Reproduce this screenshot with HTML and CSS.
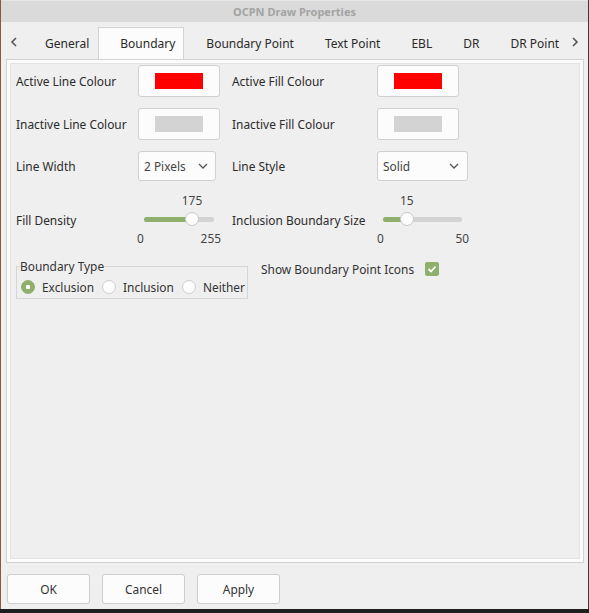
FILE: index.html
```html
<!DOCTYPE html>
<html>
<head>
<meta charset="utf-8">
<title>OCPN Draw Properties</title>
<link rel="stylesheet" href="styles.css">
</head>
<body>
<div class="window">
  <div class="titlebar">OCPN Draw Properties</div>
  <div class="tabbar">
    <div class="arrow arrow-left">
      <svg width="8" height="10" viewBox="0 0 8 10"><polyline points="6,1 2,5 6,9" fill="none" stroke="#555" stroke-width="1.6"/></svg>
    </div>
    <div class="tabs">
      <div class="tab">General</div>
      <div class="tab active">Boundary</div>
      <div class="tab">Boundary Point</div>
      <div class="tab">Text Point</div>
      <div class="tab">EBL</div>
      <div class="tab">DR</div>
      <div class="tab">DR Point</div>
    </div>
    <div class="arrow arrow-right">
      <svg width="8" height="10" viewBox="0 0 8 10"><polyline points="2,1 6,5 2,9" fill="none" stroke="#555" stroke-width="1.6"/></svg>
    </div>
  </div>
  <div class="page">
    <div class="page-inner">
      <div class="form">
        <div class="label">Active Line Colour</div>
        <div class="colour-btn"><span class="swatch red"></span></div>
        <div class="label">Active Fill Colour</div>
        <div class="colour-btn"><span class="swatch red"></span></div>

        <div class="label">Inactive Line Colour</div>
        <div class="colour-btn"><span class="swatch grey"></span></div>
        <div class="label">Inactive Fill Colour</div>
        <div class="colour-btn"><span class="swatch grey"></span></div>

        <div class="label">Line Width</div>
        <div class="combo combo-width"><span>2 Pixels</span>
          <svg width="10" height="6" viewBox="0 0 10 6"><polyline points="1,1 5,5 9,1" fill="none" stroke="#555" stroke-width="1.3"/></svg>
        </div>
        <div class="label">Line Style</div>
        <div class="combo combo-style"><span>Solid</span>
          <svg width="10" height="6" viewBox="0 0 10 6"><polyline points="1,1 5,5 9,1" fill="none" stroke="#555" stroke-width="1.3"/></svg>
        </div>

        <div class="label label-slider">Fill Density</div>
        <div class="slider slider-density" style="--p:68.6%">
          <div class="s-val"><span>175</span></div>
          <div class="s-track"><div class="s-fill"></div><div class="s-thumb"></div></div>
          <div class="s-range"><span>0</span><span>255</span></div>
        </div>
        <div class="label label-slider">Inclusion Boundary Size</div>
        <div class="slider slider-size" style="--p:30%">
          <div class="s-val"><span>15</span></div>
          <div class="s-track"><div class="s-fill"></div><div class="s-thumb"></div></div>
          <div class="s-range"><span>0</span><span>50</span></div>
        </div>
      </div>

      <div class="row5">
        <fieldset class="group">
          <legend>Boundary Type</legend>
          <div class="radios">
            <div class="radio"><span class="dot on"></span>Exclusion</div>
            <div class="radio"><span class="dot"></span>Inclusion</div>
            <div class="radio"><span class="dot"></span>Neither</div>
          </div>
        </fieldset>
        <div class="check-row">
          <span>Show Boundary Point Icons</span>
          <span class="checkbox">
            <svg width="10" height="8" viewBox="0 0 10 8"><polyline points="1.5,4 4,6.5 8.5,1.5" fill="none" stroke="#fff" stroke-width="1.8"/></svg>
          </span>
        </div>
      </div>
    </div>
  </div>
  <div class="buttons">
    <div class="btn">OK</div>
    <div class="btn">Cancel</div>
    <div class="btn">Apply</div>
  </div>
</div>
<div class="taskbar"></div>
</body>
</html>
```
FILE: styles.css
```css
* { box-sizing: border-box; }
html, body { margin: 0; height: 100%; }
body {
  background: linear-gradient(to right, #8c5a2c 0 1px, #3a3a3a 1px);
  font-family: "Noto Sans", "Open Sans", sans-serif;
  font-size: 11.9px;
  color: #2e2e2e;
  overflow: hidden;
}
.window {
  margin-left: 1px;
  width: 587px;
  height: 609px;
  background: #efefef;
  display: flex;
  flex-direction: column;
}
.titlebar {
  height: 22px;
  background: #dadada;
  border-top: 1px solid #e6e6e6;
  display: flex;
  align-items: center;
  justify-content: center;
  font-weight: bold;
  font-size: 11px;
  color: #a3a3a3;
}
.tabbar {
  height: 37px;
  display: flex;
  position: relative;
  z-index: 1;
}
.arrow {
  width: 22px;
  display: flex;
  align-items: center;
  padding-top: 2px;
}
.arrow-left { padding-left: 9px; }
.arrow-right { width: 21px; padding-left: 4px; }
.tabs {
  flex: 1;
  display: flex;
  align-items: flex-end;
  overflow: hidden;
  font-size: 12px;
}
.tab {
  height: 32px;
  padding: 0 9px 0 22px;
  display: flex;
  align-items: center;
  white-space: nowrap;
  color: #2a2a2a;
}
.tab.active {
  height: 33px;
  margin-bottom: -1px;
  background: #fcfcfc;
  border: 1px solid #d3d3d3;
  border-bottom: none;
  padding: 0 8px 1px 21px;
}
.page {
  flex: 1;
  margin: 0 4px 0 5px;
  border: 1px solid #d2d2d2;
  background: #fbfbfb;
  padding: 3px;
  display: flex;
}
.page-inner {
  flex: 1;
  border: 1px solid #e3e3e3;
  background: #efefef;
  padding: 1px 5px;
}
.form {
  display: grid;
  grid-template-columns: 122px 94px 145px 1fr;
  row-gap: 11px;
  align-items: center;
}
.label { white-space: nowrap; color: #2b2b2b; }
.label-slider { margin-bottom: 1px; }
.colour-btn {
  width: 82px;
  height: 32px;
  background: #fcfcfc;
  border: 1px solid #d0d0d0;
  border-radius: 3px;
  display: flex;
  align-items: center;
  justify-content: center;
}
.swatch { width: 48px; height: 16px; }
.swatch.red { background: #ff0000; }
.swatch.grey { background: #d3d3d3; }
.combo {
  height: 30px;
  background: #fcfcfc;
  border: 1px solid #d0d0d0;
  border-radius: 3px;
  display: flex;
  align-items: center;
  justify-content: space-between;
  padding: 0 7px 0 5px;
  color: #444;
}
.combo-width { width: 78px; }
.combo-style { width: 91px; padding-right: 8px; }
.slider {
  height: 56px;
  display: flex;
  flex-direction: column;
  color: #444;
}
.slider-density { width: 84px; margin-left: -1px; }
.slider-size { width: 92px; }
.s-val, .s-track { margin: 0 7px 0 7px; }
.slider-size .s-val, .slider-size .s-track { margin: 0 7px 0 6px; }
.s-val { height: 16px; line-height: 16px; }
.s-val span {
  display: inline-block;
  margin-left: var(--p);
  transform: translateX(-50%);
}
.s-track {
  height: 22px;
  position: relative;
  display: flex;
  align-items: center;
}
.s-track::before {
  content: "";
  position: absolute;
  left: 0; right: 0;
  height: 5px;
  border-radius: 3px;
  background: #d3d3d3;
}
.s-fill {
  position: relative;
  width: var(--p);
  height: 5px;
  border-radius: 3px;
  background: #8fb06c;
}
.s-thumb {
  position: absolute;
  left: var(--p);
  top: 4px;
  width: 14px;
  height: 14px;
  margin-left: -7px;
  border-radius: 50%;
  background: #fdfdfd;
  border: 1px solid #c8c8c8;
}
.s-range {
  height: 16px;
  line-height: 16px;
  display: flex;
  justify-content: space-between;
}
.row5 {
  display: flex;
  margin-top: 10px;
}
.group {
  width: 232px;
  margin: 0;
  border: 1px solid #d6d6d6;
  padding: 5px 2px 3px 4px;
  min-width: 0;
}
.group legend {
  padding: 0;
  margin-left: -1px;
  line-height: 16px;
  color: #333;
}
.radios { display: flex; line-height: 16px; }
.radio {
  display: flex;
  align-items: center;
  gap: 7px;
  margin-right: 8px;
  color: #333;
}
.dot {
  width: 14px;
  height: 14px;
  border-radius: 50%;
  background: #fdfdfd;
  border: 1px solid #cfcfcf;
}
.dot.on {
  background: radial-gradient(circle, #fff 0 2px, #8fb06c 2.5px);
  border-color: #8fb06c;
}
.check-row {
  margin-left: 13px;
  margin-top: 3px;
  height: 16px;
  display: flex;
  align-items: center;
  gap: 11px;
  color: #333;
}
.checkbox {
  width: 14px;
  height: 14px;
  border-radius: 2px;
  background: #8fb06c;
  display: flex;
  align-items: center;
  justify-content: center;
}
.buttons {
  height: 46px;
  padding: 11px 0 5px 6px;
  display: flex;
  gap: 12px;
}
.btn {
  width: 83px;
  height: 30px;
  background: #fcfcfc;
  border: 1px solid #cdcdcd;
  border-radius: 3px;
  display: flex;
  align-items: center;
  justify-content: center;
  color: #333;
}
.taskbar {
  height: 4px;
  background: #1f1f1f;
}
```
